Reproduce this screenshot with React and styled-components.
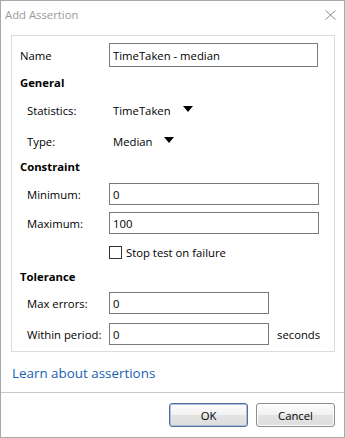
import React from "react";
import styled, { createGlobalStyle } from "styled-components";

const Global = createGlobalStyle`
  html, body { margin: 0; padding: 0; background: #d9d9d9; }
  body { font-family: "Open Sans", "Noto Sans", sans-serif; font-size: 11.3px; color: #000; }
  * { box-sizing: border-box; }
`;

const Window = styled.div`
  width: 345px;
  height: 438px;
  background: #fff;
  border: 1px solid #a8a8a8;
  display: flex;
  flex-direction: column;
`;

const TitleBar = styled.div`
  height: 26px;
  display: flex;
  align-items: center;
  justify-content: space-between;
  padding: 0 8px 0 4px;
  color: #9a9a9a;
  font-size: 11.3px;
`;

const CloseIcon = styled.svg`
  width: 11px;
  height: 10px;
  margin-top: 1px;
`;

const GroupBox = styled.div`
  width: 324px;
  margin: 8px 0 0 10px;
  border: 1px solid #dcdcdc;
  padding: 0 0 6px 8px;
  display: flex;
  flex-direction: column;
`;

const Row = styled.div`
  display: flex;
  align-items: center;
  height: ${(p) => p.$h || 22}px;
  margin-top: ${(p) => p.$top}px;
`;

const Label = styled.span`
  width: ${(p) => (p.$indent ? 82 : 89)}px;
  padding-left: ${(p) => (p.$indent ? 7 : 0)}px;
  box-sizing: content-box;
  white-space: nowrap;
`;

const Heading = styled.div`
  font-weight: 700;
  height: 16px;
  line-height: 16px;
  margin-top: ${(p) => p.$top}px;
`;

const Input = styled.div`
  width: ${(p) => p.$w}px;
  height: ${(p) => p.$h || 22}px;
  border: 1px solid #7a7a7a;
  display: flex;
  align-items: center;
  padding-left: 3px;
`;

const Select = styled.div`
  display: flex;
  align-items: center;
  gap: ${(p) => p.$gap}px;
  padding-left: 4px;
`;

const Caret = styled.svg`
  width: 10px;
  height: 6px;
  margin-top: -2px;
`;

const CheckRow = styled.label`
  display: flex;
  align-items: center;
  gap: 4px;
  margin-left: 89px;
`;

const Box = styled.span`
  width: 13px;
  height: 13px;
  border: 1px solid #333;
  background: #fff;
`;

const Suffix = styled.span`
  margin-left: 8px;
`;

const Link = styled.a`
  display: block;
  margin: 12px 0 0 11px;
  height: 18px;
  line-height: 18px;
  font-size: 13.4px;
  color: #1a5fb4;
  text-decoration: none;
  font-family: "Open Sans", "Noto Sans", sans-serif;
`;

const Footer = styled.div`
  margin-top: 10px;
  border-top: 1px solid #c8c8c8;
  padding: 10px 9px 0 0;
  display: flex;
  justify-content: flex-end;
  gap: 8px;
`;

const Button = styled.button`
  width: 79px;
  height: 24px;
  font-family: inherit;
  font-size: 11.3px;
  color: #000;
  border-radius: 3px;
  border: 1px solid ${(p) => (p.$primary ? "#5a6c93" : "#8e8e8e")};
  box-shadow: ${(p) => (p.$primary ? "inset 0 0 0 1px #a9c0e3" : "inset 0 0 0 1px #fcfcfc")};
  background: linear-gradient(#fdfdfd 0%, #f1f1f1 50%, #e3e3e3 51%, #dedede 100%);
  padding: 0;
`;

export default function App() {
  return (
    <>
      <Global />
      <Window>
        <TitleBar>
          <span>Add Assertion</span>
          <CloseIcon viewBox="0 0 11 10">
            <path d="M0.5 0.5 L10.5 9.5 M10.5 0.5 L0.5 9.5" stroke="#8a8a8a" strokeWidth="1" fill="none" />
          </CloseIcon>
        </TitleBar>
        <GroupBox>
          <Row $top={7} $h={24}>
            <Label>Name</Label>
            <Input $w={209} $h={24}>TimeTaken - median</Input>
          </Row>
          <Heading $top={8}>General</Heading>
          <Row $top={8}>
            <Label $indent>Statistics:</Label>
            <Select $gap={12}>
              TimeTaken
              <Caret viewBox="0 0 10 6"><path d="M0 0 H10 L5 6 Z" fill="#000" /></Caret>
            </Select>
          </Row>
          <Row $top={9}>
            <Label $indent>Type:</Label>
            <Select $gap={12}>
              Median
              <Caret viewBox="0 0 10 6"><path d="M0 0 H10 L5 6 Z" fill="#000" /></Caret>
            </Select>
          </Row>
          <Heading $top={7}>Constraint</Heading>
          <Row $top={8}>
            <Label $indent>Minimum:</Label>
            <Input $w={210}>0</Input>
          </Row>
          <Row $top={7}>
            <Label $indent>Maximum:</Label>
            <Input $w={210}>100</Input>
          </Row>
          <Row $top={12} $h={13}>
            <CheckRow>
              <Box />
              Stop test on failure
            </CheckRow>
          </Row>
          <Heading $top={10}>Tolerance</Heading>
          <Row $top={7}>
            <Label $indent>Max errors:</Label>
            <Input $w={160}>0</Input>
          </Row>
          <Row $top={9}>
            <Label $indent>Within period:</Label>
            <Input $w={160}>0</Input>
            <Suffix>seconds</Suffix>
          </Row>
        </GroupBox>
        <Link href="#">Learn about assertions</Link>
        <Footer>
          <Button $primary>OK</Button>
          <Button>Cancel</Button>
        </Footer>
      </Window>
    </>
  );
}
